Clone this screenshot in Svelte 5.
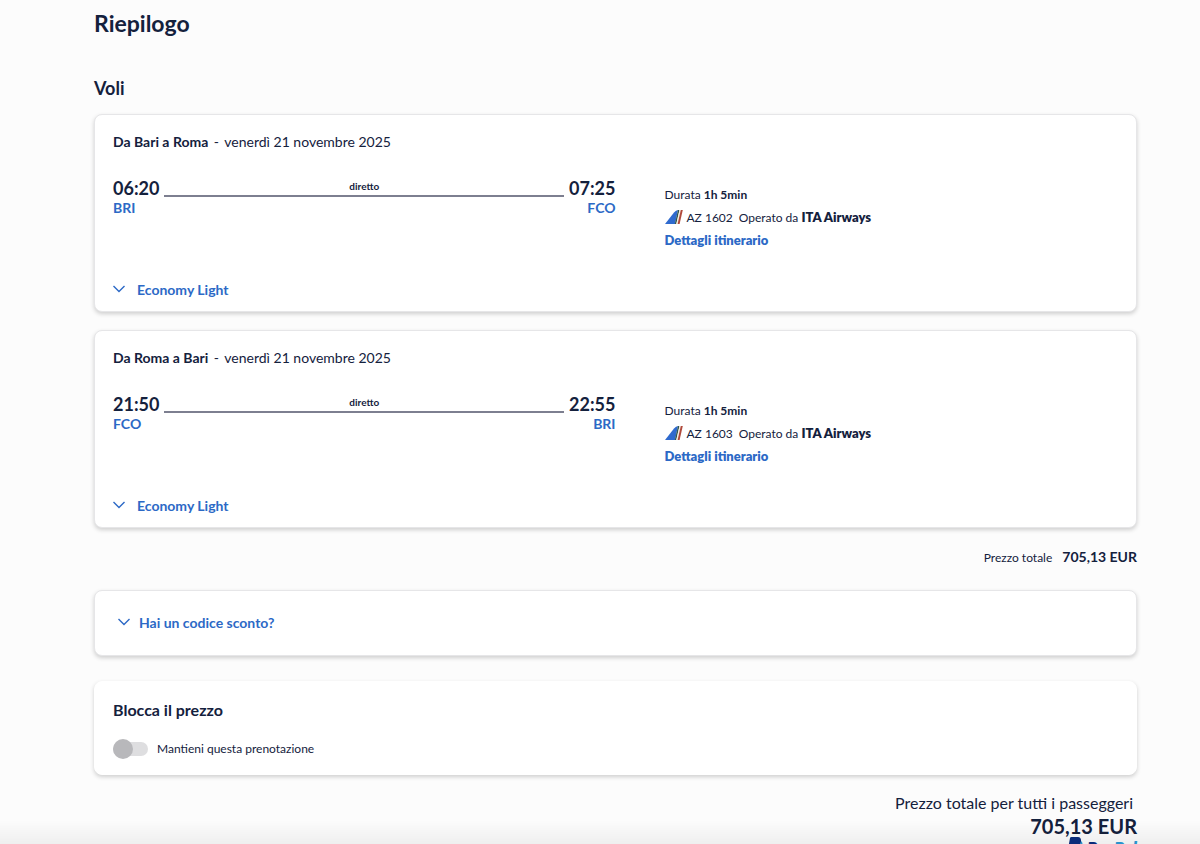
<script>
  const flights = [
    {
      title: 'Da Bari a Roma',
      date: 'venerdì 21 novembre 2025',
      departure: { time: '06:20', code: 'BRI' },
      arrival: { time: '07:25', code: 'FCO' },
      number: 'AZ 1602'
    },
    {
      title: 'Da Roma a Bari',
      date: 'venerdì 21 novembre 2025',
      departure: { time: '21:50', code: 'FCO' },
      arrival: { time: '22:55', code: 'BRI' },
      number: 'AZ 1603'
    }
  ]

  const total = '705,13 EUR'
  let hold = $state(false)
</script>

{#snippet chevron()}
  <svg class="chevron" width="12" height="8" viewBox="0 0 12 8" aria-hidden="true">
    <path d="M0.500 1L6 6.500L11.500 1" fill="none" stroke="currentColor" stroke-width="1.4" />
  </svg>
{/snippet}

<main>
  <h1>Riepilogo</h1>
  <h2>Voli</h2>

  {#each flights as flight}
    <section class="card flight">
      <h3>{flight.title} <span>-</span> <time>{flight.date}</time></h3>
      <div class="columns">
        <div class="route">
          <div class="stop">
            <strong>{flight.departure.time}</strong>
            <a href="#airport">{flight.departure.code}</a>
          </div>
          <div class="line">diretto</div>
          <div class="stop end">
            <strong>{flight.arrival.time}</strong>
            <a href="#airport">{flight.arrival.code}</a>
          </div>
        </div>
        <div class="details">
          <div>Durata <b>1h 5min</b></div>
          <div class="carrier">
            <svg width="18" height="14" viewBox="0 0 18 14" aria-hidden="true">
              <path d="M0 14L9 2.5Q11 0 13 0L10 14z" fill="#2f6ace" />
              <path d="M13 0h1.5L11.3 14H9.8z" fill="#31584e" />
              <path d="M14.5 0h1.3L12.6 14h-1.3z" fill="#f6ecdf" />
              <path d="M15.800 0H17.800L14.600 14h-2z" fill="#b04a3c" />
            </svg>
            <span>{flight.number}</span>
            <span class="operator">Operato da <b>ITA Airways</b></span>
          </div>
          <a class="more" href="#itinerary">Dettagli itinerario</a>
        </div>
      </div>
      <button class="toggle" type="button">{@render chevron()}Economy Light</button>
    </section>
  {/each}

  <p class="subtotal">Prezzo totale <strong>{total}</strong></p>

  <section class="card promo">
    <button class="toggle" type="button">{@render chevron()}Hai un codice sconto?</button>
  </section>

  <section class="card lock">
    <h3>Blocca il prezzo</h3>
    <label>
      <input type="checkbox" role="switch" bind:checked={hold} />
      Mantieni questa prenotazione
    </label>
  </section>

  <div class="total">
    <p>Prezzo totale per tutti i passeggeri</p>
    <strong>{total}</strong>
    <div class="paypal">
      <svg width="16" height="20" viewBox="0 0 16 20" aria-hidden="true">
        <path d="M3 1Q3.200 0 4.500 0H11Q14.500 0 14 5Q13 11 7.500 11H5.500L4 18H0z" fill="#0c2f80" />
        <path d="M14 4Q16.500 6 15 10Q13 14 8.500 14L7.500 20H3.500L5.500 11H7.500Q13 11 14 4z" fill="#2a9bd8" />
      </svg>
      <span>Pay<em>Pal</em></span>
    </div>
  </div>
</main>

<div class="fade"></div>

<style>
  :global(body) {
    background: #fcfcfc;
    color: #14213d;
    font-family: Lato, "Liberation Sans", sans-serif;
  }

  main {
    box-sizing: border-box;
    height: 100vh;
    overflow-y: auto;
    scrollbar-width: none;
    padding: 7px 63px 24px 94px;
  }

  h1, h2, h3, p {
    margin: 0;
  }

  h1 {
    font-size: 23px;
    line-height: 32px;
    font-weight: 700;
  }

  h2 {
    margin: 37px 0 14px;
    font-size: 18px;
    line-height: 24px;
    font-weight: 700;
  }

  a {
    color: #2c69c6;
    text-decoration: none;
  }

  .card {
    box-sizing: border-box;
    background: #fff;
    border: 1px solid #e6e6e8;
    border-radius: 8px;
    box-shadow: 0 2px 4px rgba(0, 0, 0, 0.18);
  }

  .flight {
    padding: 17px 18px 11px;
    margin-bottom: 18px;
  }

  .flight h3 {
    font-size: 14px;
    line-height: 20px;
    font-weight: 700;
  }

  .flight h3 span {
    margin: 0 2px;
    font-weight: 400;
  }

  .flight time {
    font-weight: 400;
  }

  .columns {
    display: grid;
    grid-template-columns: 1fr 1fr;
    margin: 26px 0 28px;
  }

  .route {
    display: flex;
    align-items: flex-start;
    gap: 5px;
  }

  .stop {
    display: flex;
    flex-direction: column;
  }

  .stop strong {
    font-size: 18px;
    line-height: 21px;
    font-weight: 700;
  }

  .stop a {
    font-size: 14px;
    line-height: 18px;
    font-weight: 700;
  }

  .end {
    text-align: right;
  }

  .line {
    flex: 1;
    padding-bottom: 1px;
    border-bottom: 2px solid #7d7f90;
    font-size: 10px;
    line-height: 16px;
    font-weight: 700;
    text-align: center;
  }

  .details {
    padding: 6px 0 0 49px;
    font-size: 12px;
    line-height: 22px;
  }

  .carrier {
    display: flex;
    align-items: center;
  }

  .carrier svg {
    margin: 0 4px 2px 0;
  }

  .operator {
    margin-left: 6px;
  }

  .operator b,
  .more {
    font-size: 13px;
    font-weight: 800;
  }

  .toggle {
    display: flex;
    align-items: center;
    gap: 12px;
    padding: 0;
    border: 0;
    background: none;
    color: #2c69c6;
    font: 700 14px/20px Lato, "Liberation Sans", sans-serif;
    cursor: pointer;
  }

  .chevron {
    padding-bottom: 2px;
  }

  .subtotal {
    display: flex;
    justify-content: flex-end;
    align-items: baseline;
    gap: 10px;
    font-size: 12px;
    line-height: 22px;
  }

  .subtotal strong {
    font-size: 14px;
    font-weight: 700;
  }

  .promo {
    margin: 21px 0 25px;
    padding: 22px 23px;
  }

  .promo .toggle {
    gap: 9px;
  }

  .lock {
    padding: 18px 18px 16px;
    border-color: #fff;
  }

  .lock h3 {
    font-size: 16px;
    line-height: 20px;
    font-weight: 700;
  }

  .lock label {
    display: flex;
    align-items: center;
    gap: 9px;
    margin-top: 20px;
    font-size: 12px;
    line-height: 18px;
  }

  .lock input {
    position: relative;
    appearance: none;
    width: 35px;
    height: 14px;
    margin: 0;
    border-radius: 7px;
    background: #dedee0;
  }

  .lock input::before {
    content: '';
    position: absolute;
    top: -3px;
    left: 0;
    width: 20px;
    height: 20px;
    border-radius: 50%;
    background: #b8b8bb;
  }

  .lock input:checked::before {
    left: 15px;
    background: #2c69c6;
  }

  .total {
    margin-top: 16px;
    text-align: right;
  }

  .total p {
    padding-right: 4px;
    font-size: 16px;
    line-height: 24px;
  }

  .total strong {
    display: block;
    font-size: 20px;
    line-height: 22px;
    font-weight: 700;
  }

  .paypal {
    display: flex;
    justify-content: flex-end;
    gap: 4px;
    color: #0c2f80;
    font-size: 17px;
    line-height: 22px;
    font-weight: 800;
    font-style: italic;
  }

  .paypal em {
    color: #2a9bd8;
  }

  .fade {
    position: fixed;
    left: 0;
    right: 0;
    bottom: 0;
    height: 24px;
    background: linear-gradient(rgba(0, 0, 0, 0), rgba(0, 0, 0, 0.05));
    pointer-events: none;
  }
</style>
